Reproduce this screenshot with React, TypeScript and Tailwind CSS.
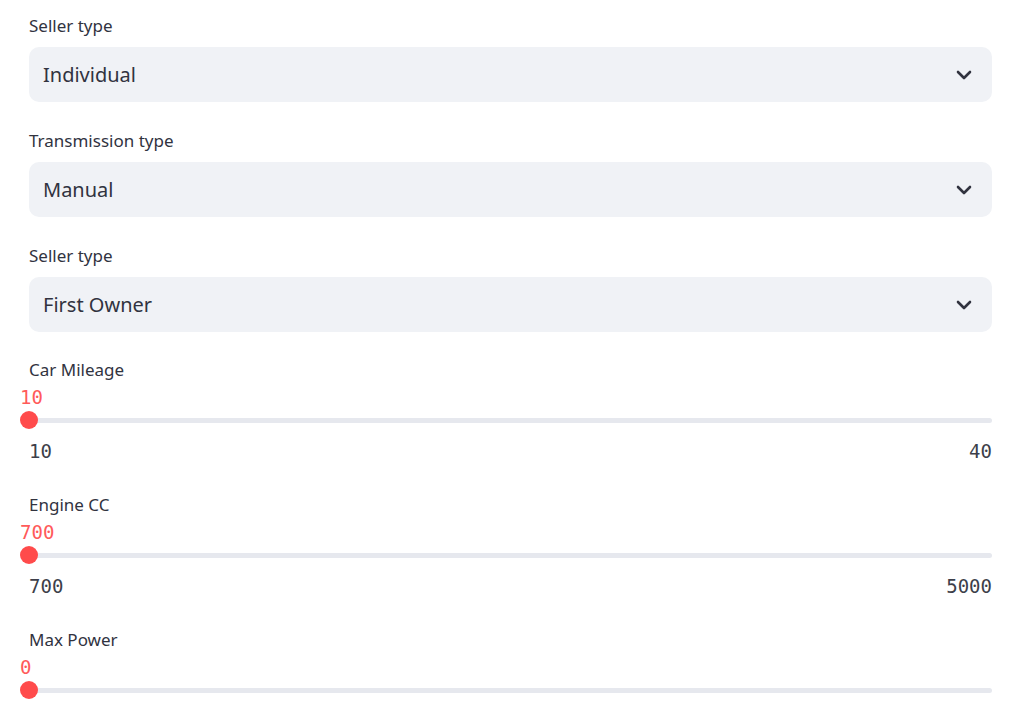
import React from "react";

const SANS = { fontFamily: '"Noto Sans", "Open Sans", sans-serif' } as const;
const MONO = { fontFamily: '"DejaVu Sans Mono", monospace' } as const;

function Chevron() {
  return (
    <svg width="16" height="10" viewBox="0 0 16 10" className="shrink-0">
      <polyline points="2,2 8,8 14,2" fill="none" stroke="#31333f" strokeWidth="2.6" strokeLinecap="round" strokeLinejoin="round" />
    </svg>
  );
}

function SelectBlock({ label, value, gapTop }: { label: string; value: string; gapTop: string }) {
  return (
    <div className={`flex flex-col ${gapTop}`}>
      <div className="h-[24px] leading-[24px] text-[17px] text-[#31333f]">{label}</div>
      <div className="mt-[9px] h-[55px] rounded-[10px] bg-[#f0f2f6] flex items-center justify-between pl-[14px] pr-[20px]">
        <span className="text-[20px] text-[#31333f]">{value}</span>
        <Chevron />
      </div>
    </div>
  );
}

function SliderBlock({
  label,
  value,
  min,
  max,
  gapTop,
  showRange = true,
}: {
  label: string;
  value: string;
  min: string;
  max: string;
  gapTop: string;
  showRange?: boolean;
}) {
  return (
    <div className={`flex flex-col ${gapTop}`}>
      <div className="h-[24px] leading-[24px] text-[17px] text-[#31333f] pl-[9px]">{label}</div>
      <div className="mt-[5px] h-[20px] leading-[20px] text-[19px] text-[#ff5a5a]" style={MONO}>
        {value}
      </div>
      <div className="mt-[4px] h-[18px] relative flex items-center pl-[9px]">
        <div className="h-[5px] w-full rounded-full bg-[#e6e8ee]" />
        <div className="absolute left-0 top-0 w-[18px] h-[18px] rounded-full bg-[#ff4b4b]" />
      </div>
      {showRange && (
        <div className="mt-[10px] h-[24px] leading-[24px] text-[19px] text-[#3d3f4a] flex justify-between pl-[9px]" style={MONO}>
          <span>{min}</span>
          <span>{max}</span>
        </div>
      )}
    </div>
  );
}

export default function App() {
  return (
    <div className="w-[1024px] h-[706px] overflow-hidden bg-white" style={SANS}>
      <div className="pt-[14px] pr-[32px]">
        <div className="pl-[29px]">
          <SelectBlock label="Seller type" value="Individual" gapTop="" />
          <SelectBlock label="Transmission type" value="Manual" gapTop="mt-[27px]" />
          <SelectBlock label="Seller type" value="First Owner" gapTop="mt-[27px]" />
        </div>
        <div className="pl-[20px]">
          <SliderBlock label="Car Mileage" value="10" min="10" max="40" gapTop="mt-[26px]" />
          <SliderBlock label="Engine CC" value="700" min="700" max="5000" gapTop="mt-[30px]" />
          <SliderBlock label="Max Power" value="0" min="0" max="200" gapTop="mt-[30px]" showRange={false} />
        </div>
      </div>
    </div>
  );
}
